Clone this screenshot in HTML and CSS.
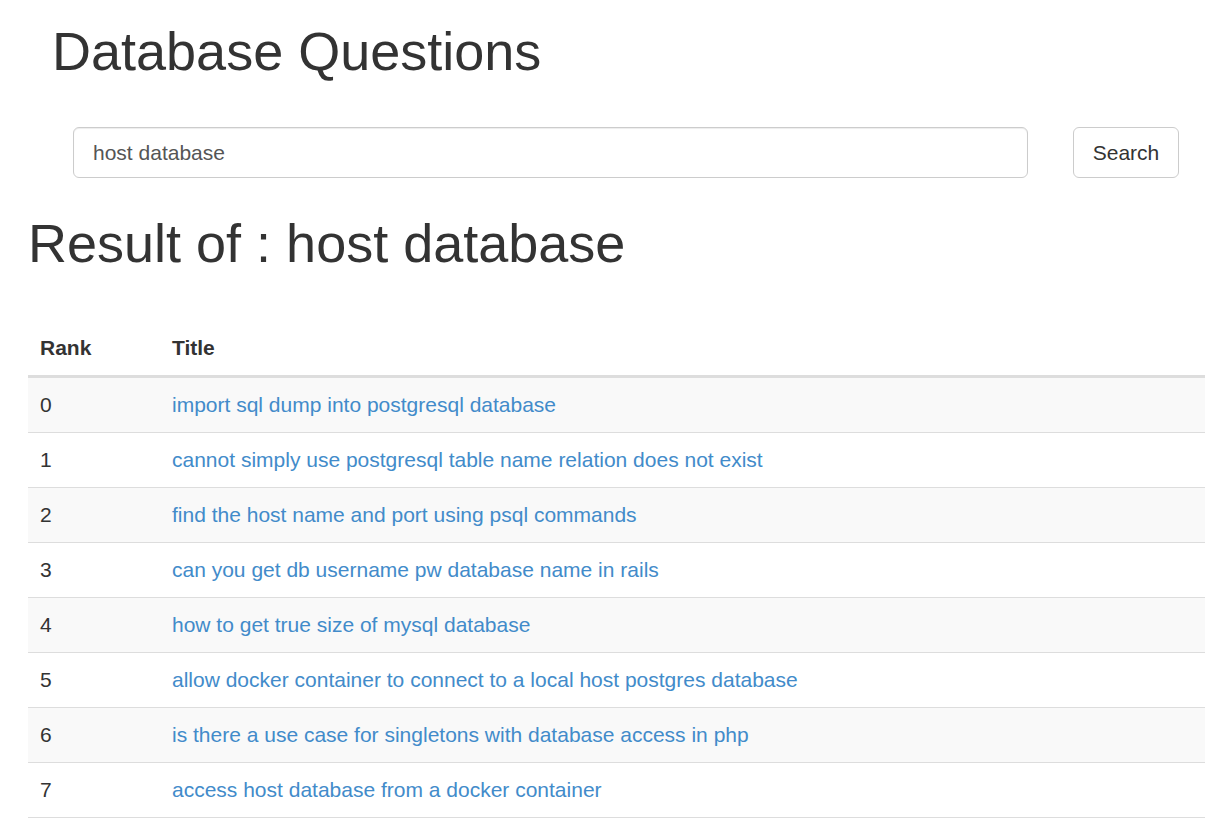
FILE: index.html
```html
<!DOCTYPE html>
<html>
<head>
<meta charset="utf-8">
<title>Database Questions</title>
<link rel="stylesheet" href="styles.css">
</head>
<body>
<div class="page">
  <h1 class="brand">Database Questions</h1>
  <form class="search">
    <input class="search-input" type="text" value="host database">
    <button class="search-btn" type="button">Search</button>
  </form>
  <h1 class="result">Result of : host database</h1>
  <table class="results">
    <thead>
      <tr><th class="col-rank">Rank</th><th>Title</th></tr>
    </thead>
    <tbody>
      <tr><td>0</td><td><a href="#">import sql dump into postgresql database</a></td></tr>
      <tr><td>1</td><td><a href="#">cannot simply use postgresql table name relation does not exist</a></td></tr>
      <tr><td>2</td><td><a href="#">find the host name and port using psql commands</a></td></tr>
      <tr><td>3</td><td><a href="#">can you get db username pw database name in rails</a></td></tr>
      <tr><td>4</td><td><a href="#">how to get true size of mysql database</a></td></tr>
      <tr><td>5</td><td><a href="#">allow docker container to connect to a local host postgres database</a></td></tr>
      <tr><td>6</td><td><a href="#">is there a use case for singletons with database access in php</a></td></tr>
      <tr><td>7</td><td><a href="#">access host database from a docker container</a></td></tr>
    </tbody>
  </table>
</div>
</body>
</html>
```

FILE: styles.css
```css
html, body {
  margin: 0;
  padding: 0;
  background: #fff;
}
body {
  font-family: "Liberation Sans", Arial, sans-serif;
  font-size: 21px;
  line-height: 30px;
  color: #333;
  overflow: hidden;
}
.page {
  padding: 22px 0 0 28px;
}
h1 {
  font-weight: 500;
  font-size: 54px;
  line-height: 59.4px;
  margin: 0;
}
.brand {
  margin-left: 24px;
}
.search {
  display: flex;
  align-items: center;
  margin: 46px 26px 0 45px;
  gap: 45px;
}
.search-input {
  flex: 1;
  height: 51px;
  box-sizing: border-box;
  border: 1px solid #ccc;
  border-radius: 6px;
  padding: 0 19px;
  font-family: inherit;
  font-size: 21px;
  color: #555;
  box-shadow: inset 0 1px 1px rgba(0,0,0,.075);
  outline: none;
}
.search-btn {
  height: 51px;
  width: 106px;
  box-sizing: border-box;
  border: 1px solid #ccc;
  border-radius: 6px;
  background: #fff;
  font-family: inherit;
  font-size: 21px;
  color: #333;
  padding: 0;
}
.result {
  margin-top: 36px;
}
.results {
  margin-top: 47px;
  width: 1177px;
  border-collapse: collapse;
  border-spacing: 0;
}
.results th, .results td {
  text-align: left;
  padding: 12px 12px;
  line-height: 30px;
  vertical-align: top;
}
.results th {
  font-weight: bold;
  border-bottom: 3px solid #ddd;
}
.results td {
  border-bottom: 1px solid #ddd;
}
.col-rank {
  width: 108px;
}
.results tbody tr:nth-child(odd) {
  background: #f9f9f9;
}
.results a {
  color: #428bca;
  text-decoration: none;
}
```
